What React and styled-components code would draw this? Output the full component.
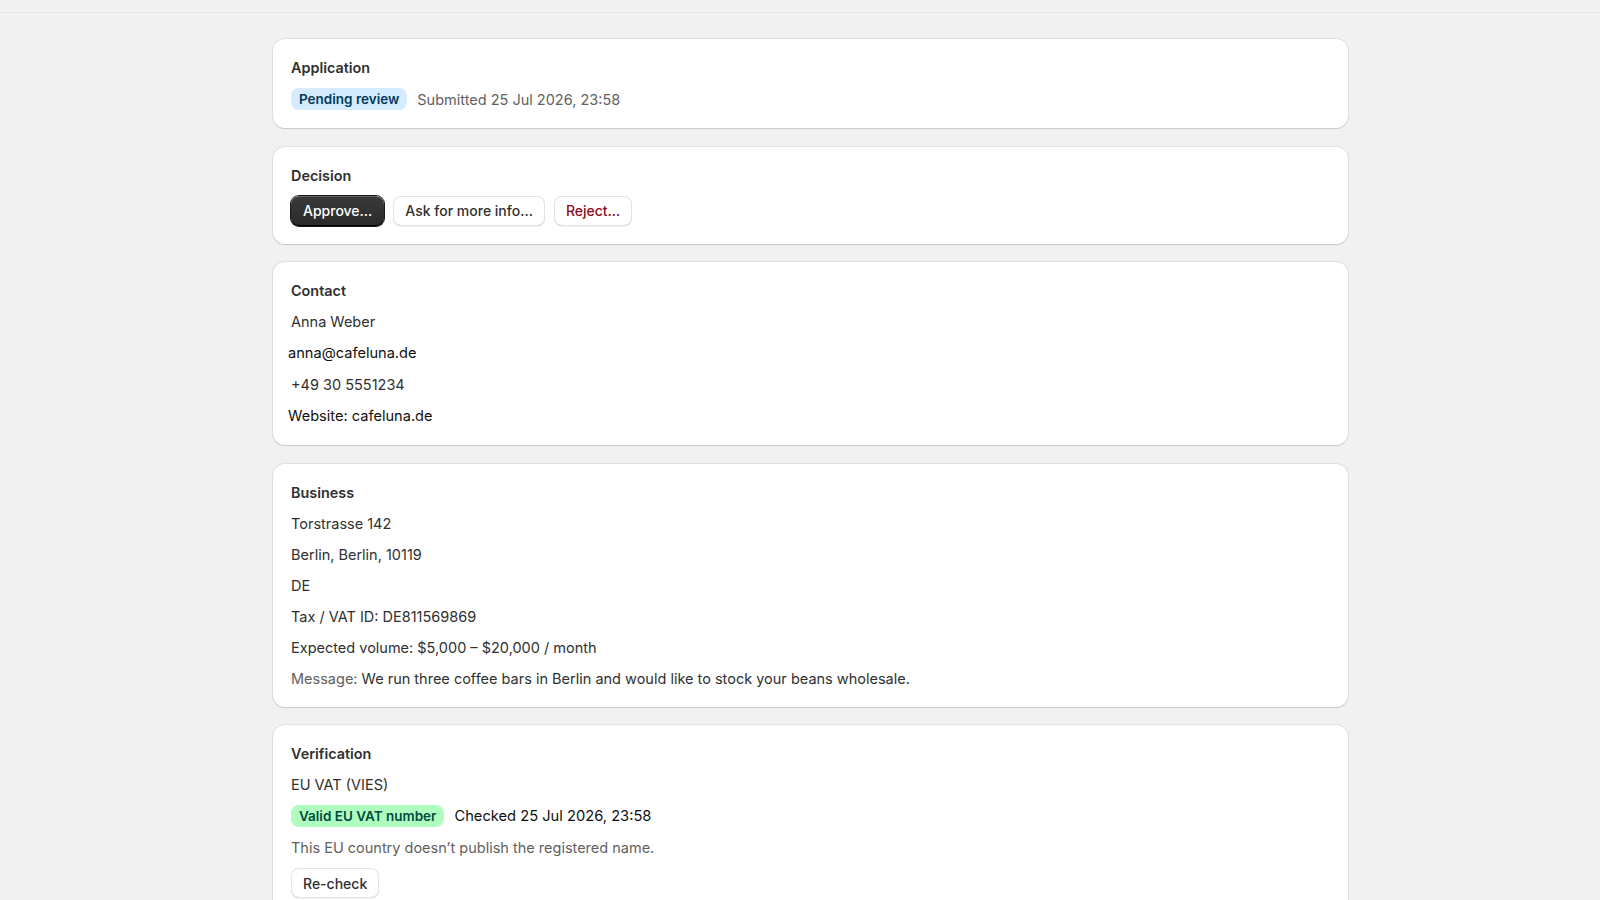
import React from 'react';
import styled, { createGlobalStyle } from 'styled-components';

/* ------------ Global ------------ */
const GlobalStyle = createGlobalStyle`
  html, body {
    margin: 0;
    padding: 0;
    background: #f1f1f1;
  }
  body {
    font-family: Inter, "Noto Sans", "Liberation Sans", sans-serif;
    color: #303030;
    -webkit-font-smoothing: antialiased;
  }
`;

/* ------------ Layout ------------ */
const TopBar = styled.div`
  height: 12px;
  border-bottom: 1px solid #e6e6e6;
`;

const Page = styled.main`
  padding: 26px 252px 0 273px;
`;

const Layout = styled.div`
  display: flex;
  flex-direction: column;
  gap: 18.5px;
`;

const Card = styled.section`
  background: #ffffff;
  border-radius: 12px;
  padding: 18px;
  box-shadow:
    0 0 0 1px rgba(0, 0, 0, 0.07),
    0 1px 1px rgba(0, 0, 0, 0.1);
  display: flex;
  flex-direction: column;
  gap: 10px;
`;

const CardTitle = styled.h2`
  margin: 0;
  font-size: 14.4px;
  line-height: 21px;
  font-weight: 600;
  color: #303030;
`;

const Line = styled.div`
  font-size: ${props => props.plain ? '14.6px' : '14.5px'};
  line-height: ${props => props.plain ? '22px' : '21px'};
  color: ${props => props.plain ? '#111111' : '#303030'};
  margin-left: ${props => props.plain ? '-3px' : '0'};
`;

const Muted = styled.span`
  color: #616161;
`;

const InlineRow = styled.div`
  display: flex;
  align-items: center;
  gap: 10px;
  font-size: 14.5px;
  line-height: 21px;
`;

const Badge = styled.span`
  display: inline-flex;
  align-items: center;
  height: 22px;
  padding: 0 8px;
  border-radius: 8px;
  font-size: 13.5px;
  font-weight: 600;
  background: ${props => props.tone === 'success' ? '#affebf' : '#d5ebff'};
  color: ${props => props.tone === 'success' ? '#014b40' : '#003a5a'};
`;

const Checked = styled.span`
  font-size: 14.7px;
  color: #111111;
`;

const ButtonRow = styled.div`
  display: flex;
  gap: 9px;
`;

const Button = styled.button`
  height: 30px;
  padding: 0 12px;
  border: none;
  border-radius: 8px;
  font-family: inherit;
  font-size: 14px;
  font-weight: 500;
  cursor: pointer;
  background: #ffffff;
  color: ${props => props.critical ? '#8e0b21' : '#303030'};
  box-shadow:
    inset 0 0 0 1px #e3e3e3,
    inset 0 -1px 0 #c9c9c9,
    0 1px 0 rgba(0, 0, 0, 0.05);
`;

const PrimaryButton = styled(Button)`
  color: #ffffff;
  background: linear-gradient(180deg, #3a3a3a 0%, #2a2a2a 100%);
  box-shadow:
    inset 0 1px 0 rgba(255, 255, 255, 0.22),
    inset 0 -1px 0 #000000,
    0 0 0 1px #1a1a1a;
`;

const SmallButtonRow = styled.div`
  display: flex;
`;

/* ------------ Data ------------ */
const business = [
  'Torstrasse 142',
  'Berlin, Berlin, 10119',
  'DE',
  'Tax / VAT ID: DE811569869',
  'Expected volume: $5,000 – $20,000 / month',
];

/* ------------ Component ------------ */
function App() {
  return (
    <React.Fragment>
      <GlobalStyle />
      <TopBar />
      <Page>
        <Layout>
          <Card>
            <CardTitle>Application</CardTitle>
            <InlineRow>
              <Badge>Pending review</Badge>
              <Muted>Submitted 25 Jul 2026, 23:58</Muted>
            </InlineRow>
          </Card>

          <Card>
            <CardTitle>Decision</CardTitle>
            <ButtonRow>
              <PrimaryButton>Approve…</PrimaryButton>
              <Button>Ask for more info…</Button>
              <Button critical>Reject…</Button>
            </ButtonRow>
          </Card>

          <Card>
            <CardTitle>Contact</CardTitle>
            <Line>Anna Weber</Line>
            <Line plain>anna@cafeluna.de</Line>
            <Line>+49 30 5551234</Line>
            <Line plain>Website: cafeluna.de</Line>
          </Card>

          <Card>
            <CardTitle>Business</CardTitle>
            {business.map(text => (
              <Line key={text}>{text}</Line>
            ))}
            <Line>
              <Muted>Message:</Muted> We run three coffee bars in Berlin and would like to stock your beans wholesale.
            </Line>
          </Card>

          <Card>
            <CardTitle>Verification</CardTitle>
            <Line>EU VAT (VIES)</Line>
            <InlineRow>
              <Badge tone='success'>Valid EU VAT number</Badge>
              <Checked>Checked 25 Jul 2026, 23:58</Checked>
            </InlineRow>
            <Line>
              <Muted>This EU country doesn’t publish the registered name.</Muted>
            </Line>
            <SmallButtonRow>
              <Button>Re-check</Button>
            </SmallButtonRow>
          </Card>
        </Layout>
      </Page>
    </React.Fragment>
  );
}

export default App;
